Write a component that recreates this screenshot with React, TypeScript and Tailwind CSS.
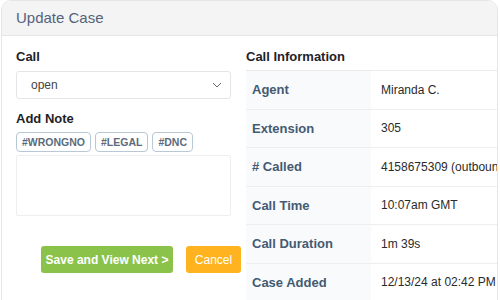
import React from "react";

const rows: [string, string][] = [
  ["Agent", "Miranda C."],
  ["Extension", "305"],
  ["# Called", "4158675309 (outbound)"],
  ["Call Time", "10:07am GMT"],
  ["Call Duration", "1m 39s"],
  ["Case Added", "12/13/24 at 02:42 PM"],
];

const tags = ["#WRONGNO", "#LEGAL", "#DNC"];

export default function App() {
  return (
    <div className="h-[300px] w-[500px] overflow-hidden bg-white font-['Liberation_Sans',Arial,sans-serif]">
      <div className="ml-px h-[320px] w-[497px] overflow-hidden rounded-t-[10px] border border-[#e4e6e8] bg-white">
        <div className="flex h-[35px] items-center border-b border-[#e2e4e6] bg-[#f4f4f5] px-[14px]">
          <h1 className="text-[15px] text-[#55637a]">Update Case</h1>
        </div>

        <div className="flex gap-[15px] pl-[14px]">
          <div className="flex w-[215px] shrink-0 flex-col">
            <p className="mt-[13px] text-[13px] font-bold leading-[16px] text-[#1f2328]">Call</p>
            <div className="mt-[6px] flex h-[28px] items-center justify-between rounded-[3px] border border-[#e3e5e8] pl-[14px] pr-[8px]">
              <span className="text-[12px] text-[#444]">open</span>
              <svg width="10" height="6" viewBox="0 0 10 6" fill="none" className="text-[#666]">
                <path d="M1 1l4 4 4-4" stroke="currentColor" strokeWidth="1" />
              </svg>
            </div>
            <p className="mt-[12px] text-[13px] font-bold leading-[16px] text-[#1f2328]">Add Note</p>
            <div className="mt-[5px] flex gap-[4px]">
              {tags.map((tag) => (
                <span
                  key={tag}
                  className="flex h-[20px] items-center rounded-[4px] border border-[#b9c8d6] px-[5px] text-[10.5px] font-bold leading-none text-[#5c6b7c]"
                >
                  {tag}
                </span>
              ))}
            </div>
            <div className="mt-[3px] h-[61px] rounded-[2px] border border-[#eceef0]" />
            <div className="mt-[30px] flex gap-[13px] pl-[25px]">
              <button
                type="button"
                className="h-[27px] w-[132px] shrink-0 whitespace-nowrap rounded-[3px] bg-[#8bc34a] text-[12px] font-bold text-white"
              >
                Save and View Next &gt;
              </button>
              <button
                type="button"
                className="h-[27px] w-[55px] shrink-0 rounded-[3px] bg-[#ffb41f] text-[12px] text-white"
              >
                Cancel
              </button>
            </div>
          </div>

          <div className="flex min-w-0 flex-1 flex-col">
            <p className="mt-[13px] text-[13px] font-bold leading-[16px] text-[#1f2328]">Call Information</p>
            <div className="mt-[5px] border-t border-[#e8eaec]">
              {rows.map(([label, value]) => (
                <div key={label} className="flex h-[38.5px] border-b border-[#eceef0]">
                  <div className="flex w-[125px] shrink-0 items-center bg-[#f9fafb] pl-[6px] text-[13px] font-bold text-[#445a73]">
                    {label}
                  </div>
                  <div className="flex items-center whitespace-nowrap pl-[10px] text-[12px] text-[#2a2a2a]">
                    {value}
                  </div>
                </div>
              ))}
            </div>
          </div>
        </div>
      </div>
    </div>
  );
}
